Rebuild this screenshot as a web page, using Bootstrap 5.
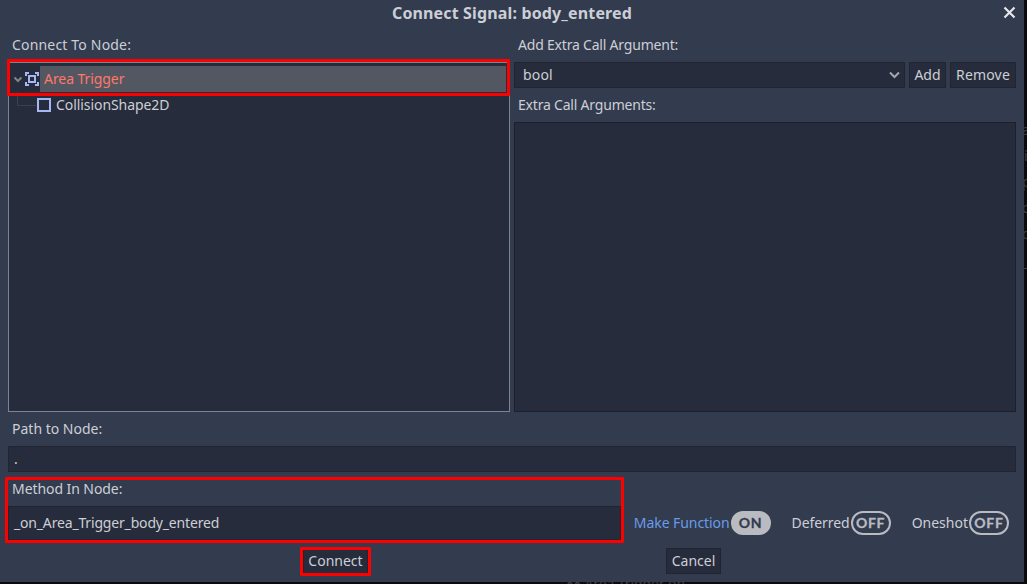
<!DOCTYPE html>
<html lang="en" data-bs-theme="dark">
<head>
<meta charset="utf-8">
<meta name="viewport" content="width=device-width, initial-scale=1">
<title>Connect Signal</title>
<link href="https://cdn.jsdelivr.net/npm/bootstrap@5.3.0/dist/css/bootstrap.min.css" rel="stylesheet">
<style>
  body { background: #0a0b0f; font: 14px/26px "Noto Sans", sans-serif; color: #cccfd5; width: 1027px; height: 584px; }
  .dialog { width: 1024px; height: 582px; background: #333b4f; z-index: 1; }
  .title { height: 32px; font-size: 16px; font-weight: 700; line-height: 26px; letter-spacing: .145px; }
  .close-x { right: 8px; top: 6px; }
  .lbl { height: 30px; padding-left: 4px; }
  .track-wide { letter-spacing: .18px; }
  .track-tight { letter-spacing: -.2px; }
  .track-slight { letter-spacing: -.07px; }
  .field { height: 26px; background: #262c3b; border: 1px solid #202531; padding: 0 8px; line-height: 24px; }
  .left-col, .right-col { width: 502px; }
  .tree { height: 350px; background: #262c3b; border: 1px solid #7d8491; padding-top: 3px; }
  .args { height: 290px; background: #262c3b; border: 1px solid #1b202c; }
  .row-line { height: 26px; }
  .selected-name { background: #535761; color: #ff786b; height: 26px; padding-left: 4px; margin-right: 3px; }
  .mark-box { border: 3px solid #f00; border-radius: 1px; pointer-events: none; }
  .mark-tree { left: 7px; top: 59px; width: 503px; height: 37px; }
  .mark-method { left: 5px; top: 477px; width: 619px; height: 66px; }
  .mark-connect { left: -4px; top: -2px; width: 71px; height: 29px; }
  .method-field { height: 34px; width: 613px; padding-left: 5px; line-height: 32px; letter-spacing: -.17px; }
  .toggles { gap: 21px; margin-right: 7px; }
  .toggle-pill { width: 40px; height: 24px; border: 2px solid #b9bbc1; border-radius: 12px; font: 700 14px/20px Lato, sans-serif; color: #b9bbc1; letter-spacing: .7px; text-align: center; margin-left: 1px; -webkit-text-stroke: .3px currentColor; }
  .toggle-pill.is-on { background: #b9bbc1; color: #333b4f; }
  .accent { color: #699ce8; }
  .behind { color: #3c3d42; overflow: hidden; line-height: 16px; }
  .behind-right { left: 1022px; top: 0; width: 5px; height: 584px; }
  .behind-bottom { left: 566px; top: 576px; width: 200px; height: 8px; letter-spacing: -.1px; }
</style>
</head>
<body class="position-relative overflow-hidden">
<div class="behind behind-right position-absolute">
  <span class="position-absolute start-0" style="top:122px">a</span>
  <span class="position-absolute" style="top:148px;left:2px">i</span>
  <span class="position-absolute start-0" style="top:174px">p</span>
  <span class="position-absolute start-0" style="top:200px">o</span>
  <span class="position-absolute start-0" style="top:226px">d</span>
  <span class="position-absolute start-0" style="top:254px">_</span>
</div>
<div class="behind behind-bottom position-absolute text-nowrap"><b>**</b> Area Trigger on</div>

<main class="dialog position-relative px-2">
  <header class="title text-center">Connect Signal: body_entered
    <svg class="close-x position-absolute" width="13" height="13" viewBox="0 0 13 13" fill="none" stroke="#e6e7ea" stroke-width="2.2"><path d="M1.500 1.500l10 10M11.500 1.500l-10 10"/></svg>
  </header>

  <div class="d-flex gap-1">
    <section class="left-col">
      <div class="lbl track-wide">Connect To Node:</div>
      <div class="tree">
        <div class="row-line d-flex align-items-center">
          <svg width="31" height="26" viewBox="0 0 31 26" fill="none"><path d="M5.500 11.500l3.500 3.500 3.500-3.500" stroke="#80848d" stroke-width="2"/><g stroke="#a5b7f3" stroke-width="2"><path d="M17 10V7h3M26 7h3v3M29 16v3h-3M20 19h-3v-3"/><rect x="20" y="10" width="6" height="6"/></g></svg>
          <div class="selected-name flex-grow-1 track-slight">Area Trigger</div>
        </div>
        <div class="row-line d-flex align-items-center">
          <svg width="47" height="26" viewBox="0 0 47 26" fill="none"><path d="M8.500 0v13.500H27" stroke="#3b404d"/><rect x="29" y="7" width="12" height="12" stroke="#a5b7f3" stroke-width="2"/></svg>
          <span class="track-slight">CollisionShape2D</span>
        </div>
      </div>
    </section>
    <section class="right-col">
      <div class="lbl track-tight">Add Extra Call Argument:</div>
      <div class="d-flex gap-1">
        <div class="field flex-grow-1 d-flex justify-content-between align-items-center pe-1"><span class="track-wide">bool</span>
          <svg width="11" height="8" viewBox="0 0 11 8" fill="none" stroke="#a4a7ae" stroke-width="2"><path d="M1 1.500l4.500 4.500L10 1.500"/></svg></div>
        <div class="field px-0 text-center" style="width:37px">Add</div>
        <div class="field px-0 text-center track-wide" style="width:66px">Remove</div>
      </div>
      <div class="lbl pt-1 mb-1 track-tight">Extra Call Arguments:</div>
      <div class="args"></div>
    </section>
  </div>

  <div class="lbl pt-1 mb-1">Path to Node:</div>
  <div class="field" style="padding-left:5px">.</div>
  <div class="lbl pt-1 mb-1 track-slight">Method In Node:</div>
  <div class="d-flex align-items-center">
    <div class="field method-field">_on_Area_Trigger_body_entered</div>
    <div class="toggles d-flex align-items-center ms-auto">
      <div class="d-flex align-items-center accent track-slight">Make Function<span class="toggle-pill is-on">ON</span></div>
      <div class="d-flex align-items-center track-slight">Deferred<span class="toggle-pill">OFF</span></div>
      <div class="d-flex align-items-center">Oneshot<span class="toggle-pill">OFF</span></div>
    </div>
  </div>
  <footer class="d-flex pt-2">
    <div class="field position-relative px-0 text-center" style="width:65px;margin-left:295px">Connect<span class="mark-box mark-connect position-absolute"></span></div>
    <div class="field px-0 text-center" style="width:55px;margin-left:298px">Cancel</div>
  </footer>
  <div class="mark-box mark-tree position-absolute"></div>
  <div class="mark-box mark-method position-absolute"></div>
</main>
<script src="https://cdn.jsdelivr.net/npm/bootstrap@5.3.0/dist/js/bootstrap.bundle.min.js"></script>
</body>
</html>
